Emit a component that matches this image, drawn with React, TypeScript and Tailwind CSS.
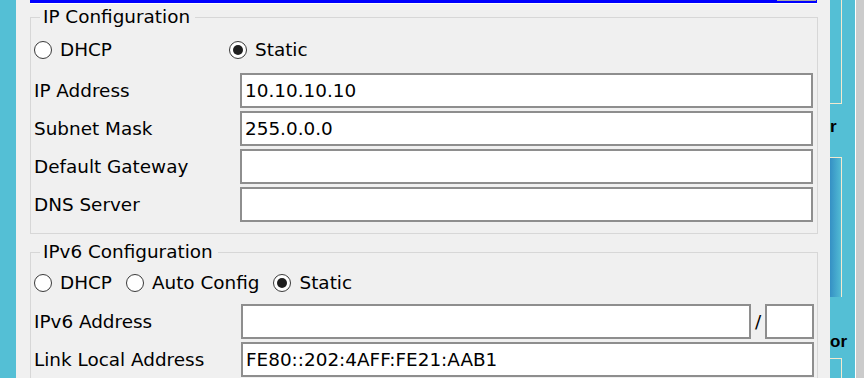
import type { ReactNode } from 'react';

function Radio({ checked, label }: { checked?: boolean; label: string }) {
  return (
    <div className="flex items-center gap-[8px]">
      <span className="flex h-[18px] w-[18px] items-center justify-center rounded-full border border-[#3a3a3a] bg-white">
        {checked && <span className="h-[10px] w-[10px] rounded-full bg-[#1e1e1e]" />}
      </span>
      <span>{label}</span>
    </div>
  );
}

function Field({ value, className }: { value?: string; className: string }) {
  return (
    <div className={`flex h-[35px] items-center border-2 border-[#8e8e8e] bg-white pl-[3px] ${className}`}>
      {value}
    </div>
  );
}

function Row({ label, labelWidth, children }: { label: string; labelWidth: string; children: ReactNode }) {
  return (
    <div className="flex items-center">
      <div className={labelWidth}>{label}</div>
      {children}
    </div>
  );
}

export default function App() {
  return (
    <div className="flex h-[378px] w-[864px] overflow-hidden bg-[#54bfd5] font-['DejaVu_Sans',sans-serif] text-[18.4px] text-black">
      {/* left desktop strip */}
      <div className="w-[16px] shrink-0" />

      {/* dialog body */}
      <div className="w-[814px] shrink-0 bg-[#f0f0f0]">
        <div className="ml-[14px] w-[787px] border-b border-white">
          <div className="flex h-[3px] justify-end bg-[#0000ff]">
            <div className="mr-[1px] h-[1px] w-[39px] bg-[#a8a8a8]" />
          </div>
        </div>

        {/* IP Configuration */}
        <fieldset className="ml-[14px] mt-[2px] w-[788px] border border-[#d7d7d7] px-[3px] pb-[11px]">
          <legend className="ml-[6px] pl-[3px] pr-[5px] leading-[22px]">IP Configuration</legend>
          <div className="mt-[5px] flex h-[34px] items-center">
            <div className="w-[195px]">
              <Radio label="DHCP" />
            </div>
            <Radio checked label="Static" />
          </div>
          <div className="mt-[6px] flex flex-col gap-[3px]">
            <Row label="IP Address" labelWidth="w-[206px]">
              <Field value="10.10.10.10" className="w-[573px]" />
            </Row>
            <Row label="Subnet Mask" labelWidth="w-[206px]">
              <Field value="255.0.0.0" className="w-[573px]" />
            </Row>
            <Row label="Default Gateway" labelWidth="w-[206px]">
              <Field className="w-[573px]" />
            </Row>
            <Row label="DNS Server" labelWidth="w-[206px]">
              <Field className="w-[573px]" />
            </Row>
          </div>
        </fieldset>

        {/* IPv6 Configuration */}
        <fieldset className="ml-[14px] mt-[7px] w-[788px] border border-[#d7d7d7] px-[3px] pb-[11px]">
          <legend className="ml-[6px] pl-[3px] pr-[5px] leading-[22px]">IPv6 Configuration</legend>
          <div className="mt-[3px] flex h-[34px] items-center gap-[14px]">
            <Radio label="DHCP" />
            <Radio label="Auto Config" />
            <Radio checked label="Static" />
          </div>
          <div className="mt-[4px] flex flex-col gap-[3px]">
            <Row label="IPv6 Address" labelWidth="w-[207px]">
              <Field className="w-[510px]" />
              <span className="w-[14px] text-center">/</span>
              <Field className="w-[49px]" />
            </Row>
            <Row label="Link Local Address" labelWidth="w-[207px]">
              <Field value="FE80::202:4AFF:FE21:AAB1" className="w-[573px]" />
            </Row>
          </div>
        </fieldset>
      </div>

      {/* background window edge */}
      <div className="flex w-[25px] shrink-0 flex-col font-['Liberation_Sans',sans-serif] text-[17px] font-bold">
        <div className="h-[104px] w-[12px] border-b border-r border-[#f2e9cf]" />
        <div className="h-[53px] pt-[14px] leading-[18px]">r</div>
        <div className="h-[141px] w-[12px] border-r border-t border-[#f2e9cf] bg-linear-to-r from-[#3590c4] to-[#52bbd4]" />
        <div className="h-[61px] pt-[36px] leading-[18px]">or</div>
        <div className="h-[20px] w-[12px] border-r border-t border-[#f2e9cf]" />
      </div>
      <div className="w-[9px] shrink-0 border-l border-white bg-[#cbcbcb]" />
    </div>
  );
}
